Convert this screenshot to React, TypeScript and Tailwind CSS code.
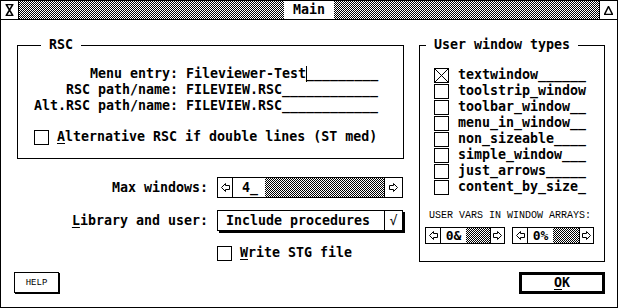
import React from 'react'

// GEM style dialog "Main"
const dither = 'bg-[image:repeating-conic-gradient(#000_0_25%,#fff_0_50%)] bg-[length:2px_2px]'

const Box = ({ checked = false }: { checked?: boolean }) => (
  <span className="w-[15px] h-[15px] border border-black shrink-0 flex items-center justify-center bg-white">
    {checked && (
      <svg width="13" height="13" viewBox="0 0 13 13">
        <path d="M0 0L13 13M13 0L0 13" stroke="#000" strokeWidth="1" />
      </svg>
    )}
  </span>
)

const LeftArrow = () => (
  <svg width="9" height="9" viewBox="0 0 9 9">
    <polygon points="0.5,4.5 4.5,0.5 4.5,2.5 8.5,2.5 8.5,6.5 4.5,6.5 4.5,8.5" fill="none" stroke="#000" strokeWidth="1" />
  </svg>
)

const RightArrow = () => (
  <svg width="9" height="9" viewBox="0 0 9 9">
    <polygon points="8.5,4.5 4.5,0.5 4.5,2.5 0.5,2.5 0.5,6.5 4.5,6.5 4.5,8.5" fill="none" stroke="#000" strokeWidth="1" />
  </svg>
)

const SmallSlider = ({ value, width }: { value: string; width: string }) => (
  <div className={`flex h-[17px] border border-black ${width}`}>
    <div className="w-[15px] border-r border-black flex items-center justify-center"><LeftArrow /></div>
    <div className="w-[25px] flex items-center justify-center text-[13px]">{value}</div>
    <div className={`flex-1 ${dither}`} />
    <div className="w-[14px] border-l border-black flex items-center justify-center"><RightArrow /></div>
  </div>
)

const windowTypes = [
  ['textwindow______', true],
  ['toolstrip_window', false],
  ['toolbar_window__', false],
  ['menu_in_window__', false],
  ['non_sizeable____', false],
  ['simple_window___', false],
  ['just_arrows_____', false],
  ['content_by_size_', false],
] as const

const App = () => {
  return (
    <div className="w-[624px] h-[308px] bg-white text-black font-['DejaVu_Sans_Mono',monospace] font-bold text-[13.3px] leading-4">
      <div className="w-[618px] h-[308px] border border-black flex flex-col">
        {/* title bar */}
        <div className="h-[19px] border-b border-black flex shrink-0">
          <div className="w-[18px] border-r border-black flex items-center justify-center">
            <svg width="9" height="12" viewBox="0 0 9 12">
              <path d="M0.5 0.5H8.5M0.5 11.5H8.5M1.5 1L7.5 11M7.5 1L1.5 11" stroke="#000" strokeWidth="1.5" fill="none" />
            </svg>
          </div>
          <div className={`flex-1 flex items-center justify-center ${dither}`}>
            <span className="bg-white px-[9px] h-[18px] flex items-center">Main</span>
          </div>
          <div className="w-[18px] border-l border-black flex items-center justify-center">
            <svg width="9" height="9" viewBox="0 0 9 9">
              <polygon points="4.5,0.5 8.5,8.5 0.5,8.5" fill="none" stroke="#000" strokeWidth="1.5" />
            </svg>
          </div>
        </div>

        {/* body */}
        <div className="flex pl-4 pt-[17px]">
          <div className="w-[387px] flex flex-col">
            <fieldset className="border border-black pt-[13px] pb-[13px] pl-4">
              <legend className="ml-[7px] px-2">RSC</legend>
              <div className="flex whitespace-pre">
                <span className="w-[144px] text-right">Menu entry:</span>
                <span className="ml-2">Fileviewer-Test</span>
                <span className="w-px h-4 bg-black" />
                <span className="-ml-px">_________</span>
              </div>
              <div className="flex whitespace-pre">
                <span className="w-[144px] text-right">RSC path/name:</span>
                <span className="ml-2">FILEVIEW.RSC____________</span>
              </div>
              <div className="flex whitespace-pre">
                <span className="w-[144px] text-right">Alt.RSC path/name:</span>
                <span className="ml-2">FILEVIEW.RSC____________</span>
              </div>
              <div className="flex items-center gap-2 mt-[15px]">
                <Box />
                <span><span className="underline underline-offset-2">A</span>lternative RSC if double lines (ST med)</span>
              </div>
            </fieldset>

            <div className="flex items-center mt-[18px]">
              <span className="w-[191px] text-right">Max windows:</span>
              <div className="ml-[9px] w-[186px] h-[21px] flex border border-black">
                <div className="w-[15px] border-r border-black flex items-center justify-center"><LeftArrow /></div>
                <div className="w-[32px] pl-[9px] flex items-center">4_</div>
                <div className={`flex-1 ${dither}`} />
                <div className="w-[18px] border-l border-black flex items-center justify-center"><RightArrow /></div>
              </div>
            </div>

            <div className="flex items-center mt-[12px]">
              <span className="w-[191px] text-right"><span className="underline underline-offset-2">L</span>ibrary and user:</span>
              <div className="ml-[9px] w-[186px] h-[21px] flex border border-black shadow-[2px_2px_0_#000]">
                <div className="flex-1 pl-[8px] flex items-center">Include procedures</div>
                <div className="w-[18px] border-l border-black flex items-center justify-center font-normal">√</div>
              </div>
            </div>

            <div className="flex items-center gap-2 mt-[14px] ml-[200px]">
              <Box />
              <span><span className="underline underline-offset-2">W</span>rite STG file</span>
            </div>
          </div>

          <div className="ml-[15px] w-[186px]">
            <fieldset className="border border-black pt-[14px] pb-[17px]">
              <legend className="ml-[6px] px-2">User window types</legend>
              <div className="flex flex-col pl-[14px]">
                {windowTypes.map(([name, checked]) => (
                  <div key={name} className="h-4 flex items-center gap-[9px]">
                    <Box checked={checked} />
                    <span>{name}</span>
                  </div>
                ))}
              </div>
              <div className="mt-[17px] ml-[9px] h-2 flex items-center font-['Liberation_Mono',monospace] font-normal text-[10px]">
                USER VARS IN WINDOW ARRAYS:
              </div>
              <div className="flex gap-[7px] ml-[5px] mt-[7px]">
                <SmallSlider value="0&" width="w-[80px]" />
                <SmallSlider value="0%" width="w-[82px]" />
              </div>
            </fieldset>
          </div>
        </div>

        <div className="flex justify-between items-start pl-[13px] pr-[12px] mt-[10px]">
          <div className="w-[45px] h-[21px] border border-black shadow-[1px_1px_0_#000] flex items-center justify-center font-['Liberation_Mono',monospace] font-normal text-[9px]">
            HELP
          </div>
          <div className="w-[86px] h-[22px] border-[3px] border-black flex items-center justify-center">
            <span><span className="underline underline-offset-2">O</span>K</span>
          </div>
        </div>
      </div>
    </div>
  )
}

export default App
